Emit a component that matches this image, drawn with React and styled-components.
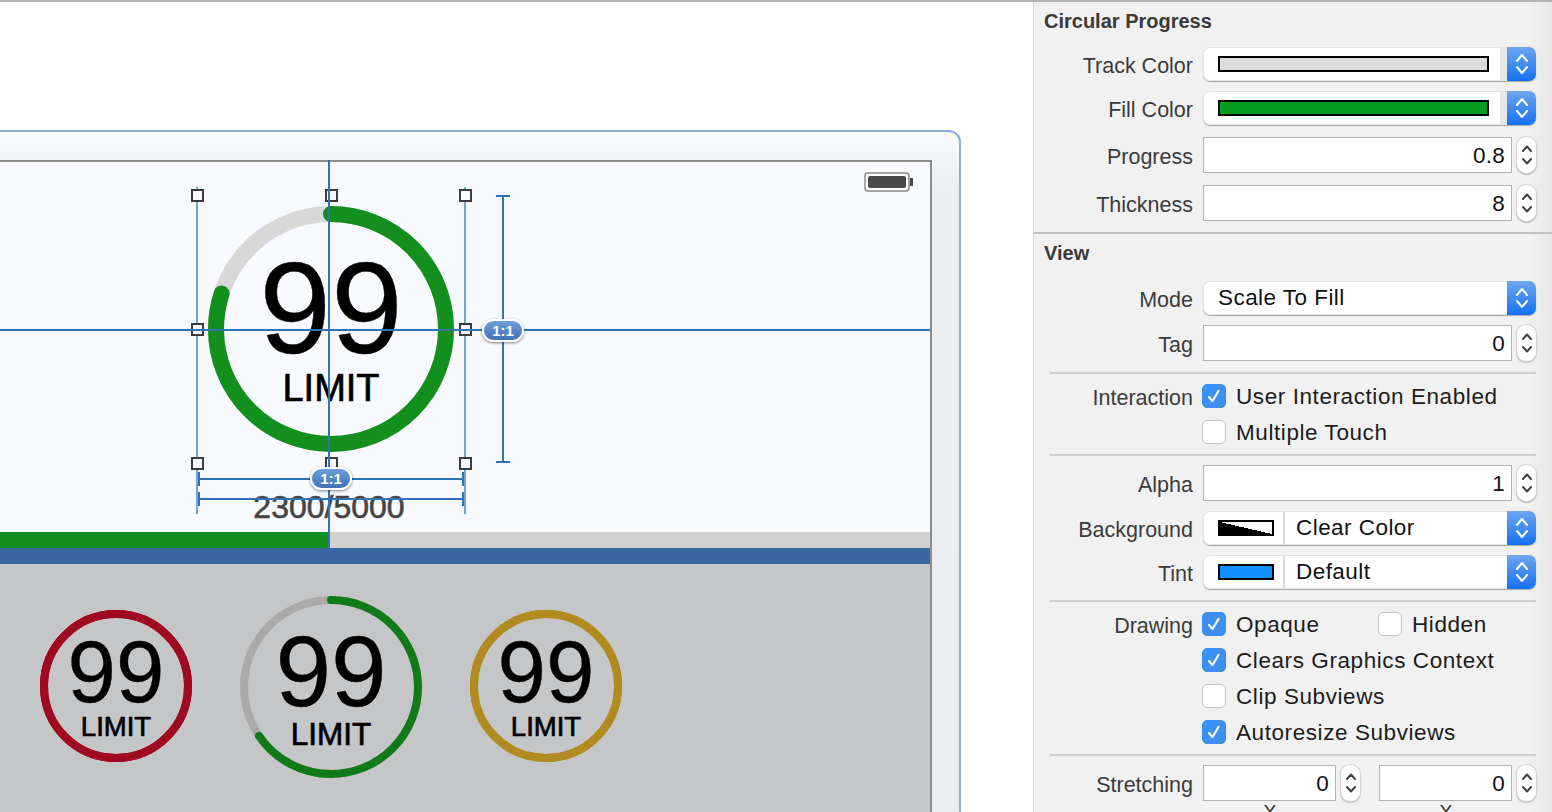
import styled, { createGlobalStyle } from "styled-components"

const GlobalStyle = createGlobalStyle`
  html, body {
    margin: 0;
    padding: 0;
    background: #fff;
    font-family: "Liberation Sans", Arial, sans-serif;
  }
`

const Page = styled.div`
  width: 1552px;
  height: 812px;
  display: flex;
  overflow: hidden;
  border-top: 2px solid #b4b4b4;
  box-sizing: border-box;
`

const Canvas = styled.div`
  width: 1033px;
  flex: none;
  padding-top: 128px;
  overflow: hidden;
  background: #fff;
`

const Device = styled.div`
  width: 1264px;
  height: 800px;
  margin-left: -303px;
  box-sizing: border-box;
  padding: 28px 27px 0 27px;
  border: 2px solid #8fabd8;
  border-radius: 12px;
  background: linear-gradient(to bottom, #f9fafb 0, #eaeef1 60px, #e9edf0 100%);
`

const Screen = styled.div`
  position: relative;
  height: 100%;
  border: 2px solid #8c8c8c;
  background: #c5c6c8;
`

const Hero = styled.div`
  position: relative;
  height: 370px;
  box-sizing: border-box;
  padding-top: 33px;
  display: flex;
  flex-direction: column;
  align-items: center;
  background: #f8faff;
`

const Battery = styled.svg`
  position: absolute;
  top: 10px;
  right: 16px;
`

const Selection = styled.div`
  position: relative;
  width: 268px;
  height: 268px;
  margin-left: 4px;
  display: flex;
  align-items: center;
  justify-content: center;
  flex: none;
`

const Count = styled.div`
  margin-top: 26px;
  font-size: 32px;
  line-height: 37px;
  color: #444;
  -webkit-text-stroke: 0.6px #444;
`

const Bar = styled.div`
  height: 16px;
  background: #d2d2d2;
`

const BarFill = styled.div`
  height: 100%;
  width: ${props => props.$value * 100}%;
  background: #128f1c;
`

const BlueBand = styled.div`
  height: 16px;
  background: #3a679f;
`

const GaugeRow = styled.div`
  display: flex;
  align-items: center;
  gap: 48px;
  padding: 32px 0 0 312px;
`

const GaugeBox = styled.div`
  position: relative;
  flex: none;
  width: ${props => props.$size}px;
  height: ${props => props.$size}px;
  margin-top: ${props => props.$lift || 0}px;
`

const GaugeText = styled.div`
  position: absolute;
  inset: 0;
  display: flex;
  flex-direction: column;
  align-items: center;
  justify-content: center;
  color: #000;
  padding-top: ${props => props.$shift}px;
  box-sizing: border-box;
`

const GaugeValue = styled.div`
  font-size: ${props => props.$font}px;
  line-height: 0.86;
  -webkit-text-stroke: 0.4px #000;
`

const GaugeLabel = styled.div`
  margin-top: ${props => props.$gap}px;
  font-size: ${props => props.$font}px;
  line-height: 1.05;
  -webkit-text-stroke: 0.7px #000;
`

const Handle = styled.div`
  position: absolute;
  left: ${props => props.$x - 6}px;
  top: ${props => props.$y - 6}px;
  width: 13px;
  height: 13px;
  box-sizing: border-box;
  border: 2px solid #3c3c3c;
  background: #f8faff;
`

const Line = styled.div`
  position: absolute;
  left: ${props => props.$x}px;
  top: ${props => props.$y}px;
  width: ${props => props.$w}px;
  height: ${props => props.$h}px;
  background: ${props => (props.$light ? "#6fa3dc" : "#2f75b5")};
`

const HMeasure = styled.div`
  position: absolute;
  left: 1px;
  top: ${props => props.$y}px;
  width: 266px;
  height: 2px;
  background: #2f75b5;

  &::before,
  &::after {
    content: "";
    position: absolute;
    top: -6px;
    width: 2px;
    height: 14px;
    background: #2f75b5;
  }
  &::before { left: 0; }
  &::after { right: 0; }
`

const VMeasure = styled.div`
  position: absolute;
  left: 305px;
  top: 0;
  width: 2px;
  height: 268px;
  background: #2f75b5;

  &::before,
  &::after {
    content: "";
    position: absolute;
    left: -6px;
    width: 14px;
    height: 2px;
    background: #2f75b5;
  }
  &::before { top: 0; }
  &::after { bottom: 0; }
`

const Ratio = styled.div`
  position: absolute;
  left: ${props => props.$x - 21}px;
  top: ${props => props.$y - 12}px;
  width: 42px;
  height: 23px;
  box-sizing: border-box;
  border: 2px solid #fff;
  border-radius: 12px;
  background: linear-gradient(to bottom, #6f9fd8, #3f72b8);
  box-shadow: 0 1px 3px rgba(0, 0, 0, 0.5);
  color: #fff;
  font-size: 15px;
  font-weight: bold;
  line-height: 19px;
  text-align: center;
`

const Inspector = styled.div`
  flex: 1;
  box-sizing: border-box;
  border-left: 1px solid #d4d4d4;
  background: linear-gradient(to right, #f1f1f1 0, #f1f1f1 494px, #e8e8e8 100%);
  overflow: hidden;
`

const Section = styled.div`
  height: ${props => props.$height}px;
  box-sizing: border-box;
`

const SectionRule = styled.div`
  height: 2px;
  background: #c2c2c2;
`

const SectionTitle = styled.div`
  height: 38px;
  padding-left: 10px;
  font-size: 20px;
  font-weight: bold;
  line-height: 38px;
  color: #3a3a3a;
`

const Rule = styled.div`
  height: 2px;
  margin: ${props => props.$top}px 16px 0 16px;
  background: #d0d0d0;
`

const Row = styled.div`
  display: flex;
  align-items: center;
  margin-top: ${props => props.$top}px;
  padding-right: 16px;
`

const Label = styled.div`
  flex: none;
  width: 159px;
  height: 24px;
  margin-right: 10px;
  text-align: right;
  font-size: 21.5px;
  line-height: 28px;
  color: #3b3b3b;
`

const Popup = styled.div`
  flex: 1;
  height: 34px;
  display: flex;
  align-items: center;
  box-sizing: border-box;
  border-radius: 7px;
  background: #fff;
  box-shadow: inset 0 0 0 1px #e2e2e2, 0 1px 1px #a8a8a8;
  overflow: hidden;
  font-size: 22.5px;
  color: #111;
`

const PopupText = styled.div`
  flex: 1;
  padding-left: ${props => props.$inset}px;
  letter-spacing: 0.45px;
`

const PopupButton = styled.div`
  flex: none;
  width: 29px;
  height: 100%;
  display: flex;
  align-items: center;
  justify-content: center;
  background: linear-gradient(to bottom, #6fa6ee, #1473f1);
`

const WideSwatch = styled.div`
  flex: 1;
  height: 16px;
  margin: 0 11px 0 15px;
  box-sizing: border-box;
  border: 2px solid #000;
  background: ${props => props.$color};
`

const SwatchGap = styled.div`
  flex: none;
  width: 7px;
  height: 100%;
  background: #e7e7e7;
`

const SmallSwatchCell = styled.div`
  flex: none;
  width: 82px;
  height: 100%;
  display: flex;
  align-items: center;
  padding-left: 15px;
  box-sizing: border-box;
  border-right: 2px solid #dcdcdc;
`

const SmallSwatch = styled.div`
  width: 56px;
  height: 16px;
  box-sizing: border-box;
  border: 2px solid #000;
  background: ${props => props.$fill};
`

const Field = styled.div`
  flex: 1;
  height: 36px;
  box-sizing: border-box;
  padding-right: 6px;
  border: 1px solid #b4b4b4;
  background: #fff;
  font-size: 22.5px;
  letter-spacing: 0.2px;
  line-height: 36px;
  text-align: right;
  color: #111;
`

const Stepper = styled.div`
  flex: none;
  width: 19px;
  height: 36px;
  margin-left: 5px;
  display: flex;
  align-items: center;
  justify-content: center;
  box-sizing: border-box;
  border-radius: 9px;
  background: #fff;
  box-shadow: 0 0 0 1px #d4d4d4, 0 1px 1px 1px #bdbdbd;
`

const Pair = styled.div`
  flex: 1;
  display: flex;
  margin-left: ${props => props.$gap}px;
`

const Check = styled.div`
  flex: none;
  width: 24px;
  height: 24px;
  box-sizing: border-box;
  display: flex;
  align-items: center;
  justify-content: center;
  border-radius: 5px;
  border: 1px solid ${props => (props.$on ? "#3d8ff0" : "#c6c6c6")};
  background: ${props => (props.$on ? "#3d8ff0" : "#fff")};
`

const CheckLine = styled.div`
  display: flex;
  align-items: center;
  height: 24px;
  width: ${props => props.$width || "auto"};
  margin-left: ${props => props.$indent || 0}px;
`

const CheckText = styled.div`
  height: 24px;
  margin-left: 10px;
  font-size: 22.5px;
  line-height: 26px;
  letter-spacing: 0.58px;
  color: #1c1c1c;
  white-space: nowrap;
`

const AxisRow = styled.div`
  display: flex;
  margin-left: 169px;
`

const AxisLabel = styled.div`
  width: ${props => props.$width}px;
  margin-top: ${props => props.$top}px;
  text-align: center;
  font-size: 20px;
  line-height: 20px;
  color: #3b3b3b;
`

function Chevrons({ light }) {
  const color = light ? "#fff" : "#444"
  return (
    <svg width="14" height="26" viewBox="0 0 14 26" fill="none" stroke={color} strokeWidth="2" strokeLinecap="round" strokeLinejoin="round">
      <path d={light ? "M2 10 L7 4 L12 10" : "M3 9 L7 4.5 L11 9"} />
      <path d={light ? "M2 16 L7 22 L12 16" : "M3 17 L7 21.5 L11 17"} />
    </svg>
  )
}

function Tick() {
  return (
    <svg width="16" height="16" viewBox="0 0 16 16" fill="none" stroke="#fff" strokeWidth="2.2" strokeLinecap="round" strokeLinejoin="round">
      <path d="M3 9 L6.5 13 L12.5 3" />
    </svg>
  )
}

function Gauge({ size, stroke, progress, track, fill, valueFont, labelFont, gap, shift, lift }) {
  const r = (size - stroke) / 2
  const c = size / 2
  return (
    <GaugeBox $size={size} $lift={lift}>
      <svg width={size} height={size} viewBox={`0 0 ${size} ${size}`} fill="none">
        <circle cx={c} cy={c} r={r} stroke={track} strokeWidth={stroke} />
        <circle
          cx={c}
          cy={c}
          r={r}
          stroke={fill}
          strokeWidth={stroke}
          strokeLinecap="round"
          pathLength="1"
          strokeDasharray={`${progress} 1`}
          transform={`rotate(-90 ${c} ${c})`}
        />
      </svg>
      <GaugeText $shift={shift}>
        <GaugeValue $font={valueFont}>99</GaugeValue>
        <GaugeLabel $font={labelFont} $gap={gap}>LIMIT</GaugeLabel>
      </GaugeText>
    </GaugeBox>
  )
}

function ColorRow({ label, color, top }) {
  return (
    <Row $top={top}>
      <Label>{label}</Label>
      <Popup>
        <WideSwatch $color={color} />
        <SwatchGap />
        <PopupButton><Chevrons light /></PopupButton>
      </Popup>
    </Row>
  )
}

function SwatchRow({ label, fill, text, top }) {
  return (
    <Row $top={top}>
      <Label>{label}</Label>
      <Popup>
        <SmallSwatchCell><SmallSwatch $fill={fill} /></SmallSwatchCell>
        <PopupText $inset={11}>{text}</PopupText>
        <PopupButton><Chevrons light /></PopupButton>
      </Popup>
    </Row>
  )
}

function NumberRow({ label, value, top }) {
  return (
    <Row $top={top}>
      <Label>{label}</Label>
      <Field>{value}</Field>
      <Stepper><Chevrons /></Stepper>
    </Row>
  )
}

function CheckRow({ label, text, on, top, extra }) {
  return (
    <Row $top={top}>
      <Label>{label}</Label>
      <CheckLine $indent={-1} $width={extra ? "176px" : undefined}>
        <Check $on={on}>{on && <Tick />}</Check>
        <CheckText>{text}</CheckText>
      </CheckLine>
      {extra && (
        <CheckLine>
          <Check />
          <CheckText>{extra}</CheckText>
        </CheckLine>
      )}
    </Row>
  )
}

const handles = [
  [0, 0], [134, 0], [268, 0],
  [0, 134], [268, 134],
  [0, 268], [134, 268], [268, 268],
]

function App() {
  return (
    <>
      <GlobalStyle />
      <Page>
        <Canvas>
          <Device>
            <Screen>
              <Hero>
                <Battery width="50" height="20" viewBox="0 0 50 20">
                  <rect x="1" y="1" width="44" height="18" rx="3" fill="#fff" stroke="#8a8a8a" strokeWidth="1.5" />
                  <rect x="4" y="4" width="38" height="12" rx="2" fill="#4a4a4a" />
                  <rect x="46" y="6" width="3" height="8" fill="#4a4a4a" />
                </Battery>
                <Selection>
                  <Gauge size={246} stroke={16} progress={0.8} track="#d8d8d8" fill="#128f1c" valueFont={129} labelFont={38} gap={5} shift={4} />
                  <Line $light $x={-1} $y={-8} $w={2} $h={327} />
                  <Line $light $x={267} $y={-8} $w={2} $h={327} />
                  {handles.map(([x, y]) => <Handle key={`${x}-${y}`} $x={x} $y={y} />)}
                  <Line $x={131} $y={-35} $w={2} $h={388} />
                  <Line $x={-500} $y={134} $w={1233} $h={2} />
                  <VMeasure />
                  <HMeasure $y={283} />
                  <HMeasure $y={303} />
                  <Ratio $x={306} $y={136}>1:1</Ratio>
                  <Ratio $x={134} $y={284}>1:1</Ratio>
                </Selection>
                <Count>2300/5000</Count>
              </Hero>
              <Bar><BarFill $value={0.5} /></Bar>
              <BlueBand />
              <GaugeRow>
                <Gauge size={152} stroke={8} progress={1} track="#a00a20" fill="#a00a20" valueFont={87} labelFont={27.5} gap={4} shift={5} lift={-2} />
                <Gauge size={182} stroke={8} progress={0.655} track="#a9a9a9" fill="#117a18" valueFont={100} labelFont={31.5} gap={4} shift={6} />
                <Gauge size={152} stroke={8} progress={1} track="#b28b20" fill="#b28b20" valueFont={87} labelFont={27.5} gap={4} shift={5} lift={-2} />
              </GaugeRow>
            </Screen>
          </Device>
        </Canvas>

        <Inspector>
          <Section $height={230}>
            <SectionTitle>Circular Progress</SectionTitle>
            <ColorRow label="Track Color" color="#dcdcdc" top={7} />
            <ColorRow label="Fill Color" color="#069c1f" top={10} />
            <NumberRow label="Progress" value="0.8" top={12} />
            <NumberRow label="Thickness" value="8" top={12} />
          </Section>
          <SectionRule />
          <Section>
            <SectionTitle>View</SectionTitle>
            <Row $top={9}>
              <Label>Mode</Label>
              <Popup>
                <PopupText $inset={15}>Scale To Fill</PopupText>
                <PopupButton><Chevrons light /></PopupButton>
              </Popup>
            </Row>
            <NumberRow label="Tag" value="0" top={10} />
            <Rule $top={11} />
            <CheckRow label="Interaction" text="User Interaction Enabled" on top={10} />
            <CheckRow text="Multiple Touch" top={12} />
            <Rule $top={10} />
            <NumberRow label="Alpha" value="1" top={9} />
            <SwatchRow label="Background" fill="linear-gradient(to top right, #000 50%, #fff 50%)" text="Clear Color" top={10} />
            <SwatchRow label="Tint" fill="#1290ff" text="Default" top={10} />
            <Rule $top={11} />
            <CheckRow label="Drawing" text="Opaque" on extra="Hidden" top={10} />
            <CheckRow text="Clears Graphics Context" on top={12} />
            <CheckRow text="Clip Subviews" top={12} />
            <CheckRow text="Autoresize Subviews" on top={12} />
            <Rule $top={10} />
            <Row $top={9}>
              <Label>Stretching</Label>
              <Pair $gap={0}>
                <Field>0</Field>
                <Stepper><Chevrons /></Stepper>
              </Pair>
              <Pair $gap={19}>
                <Field>0</Field>
                <Stepper><Chevrons /></Stepper>
              </Pair>
            </Row>
            <AxisRow>
              <AxisLabel $width={134} $top={1}>X</AxisLabel>
              <AxisLabel $width={42} $top={1} />
              <AxisLabel $width={134} $top={1}>X</AxisLabel>
            </AxisRow>
          </Section>
        </Inspector>
      </Page>
    </>
  )
}

export default App
